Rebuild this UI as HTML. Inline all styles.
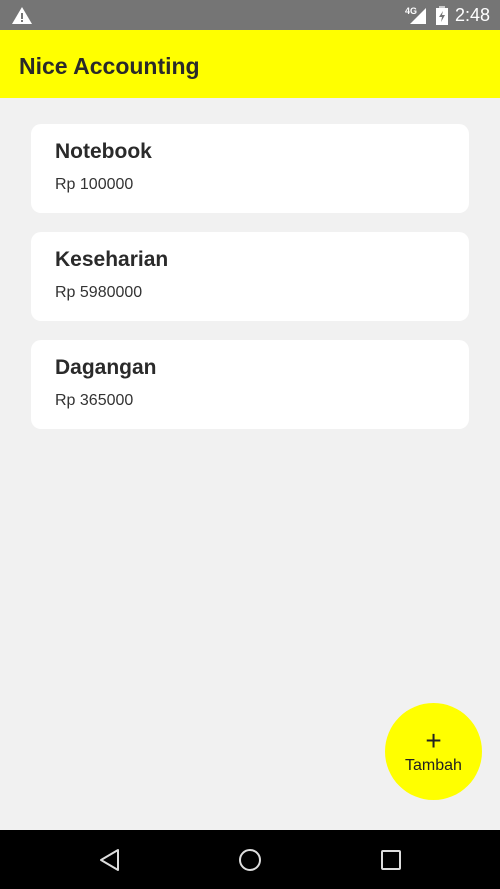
<!DOCTYPE html>
<html><head><style>
*{margin:0;padding:0;box-sizing:border-box}
body{width:500px;height:889px;background:#f1f1f1;font-family:"Liberation Sans",Roboto,sans-serif;position:relative;overflow:hidden}
.sb{position:absolute;left:0;top:0;width:500px;height:30px;background:#757575}
.ab{position:absolute;left:0;top:30px;width:500px;height:68px;background:#ffff00}
.ab h1{position:absolute;left:19px;top:23px;font-size:23px;font-weight:bold;color:#2a2a2a;letter-spacing:0}
.card{position:absolute;left:31px;width:438px;height:89px;background:#fff;border-radius:10px}
.card b{position:absolute;left:24px;top:16px;font-size:21px;color:#2a2a2a}
.card span{position:absolute;left:24px;top:52px;font-size:16px;color:#333}
.fab{position:absolute;left:385px;top:703px;width:97px;height:97px;border-radius:50%;background:#ffff00;text-align:center;color:#222}
.nav{position:absolute;left:0;top:830px;width:500px;height:59px;background:#000}
</style></head><body>
<div class="sb">
<svg style="position:absolute;left:12px;top:7px" width="20" height="17" viewBox="0 0 20 17"><path d="M10 0L20 17H0Z" fill="#fff"/><rect x="9" y="6" width="2" height="6" fill="#757575"/><rect x="9" y="13" width="2" height="2" fill="#757575"/></svg>
<div style="position:absolute;left:405px;top:6px;color:#fff;font-size:9px;font-weight:bold">4G</div>
<svg style="position:absolute;left:410px;top:8px" width="17" height="16"><path d="M16 0V16H0Z" fill="#fff"/></svg>
<svg style="position:absolute;left:436px;top:6px" width="12" height="19"><rect x="3" y="0" width="6" height="2" fill="#ccc"/><rect x="0" y="2" width="12" height="17" fill="#fff"/><path d="M7 5L3 11H6L5 16L9 9H6Z" fill="#757575"/></svg>
<div style="position:absolute;left:455px;top:5px;color:#fff;font-size:18px">2:48</div>
</div>
<div class="ab"><h1>Nice Accounting</h1></div>
<div class="card" style="top:124px"><b>Notebook</b><span>Rp 100000</span></div>
<div class="card" style="top:232px"><b>Keseharian</b><span>Rp 5980000</span></div>
<div class="card" style="top:340px"><b>Dagangan</b><span>Rp 365000</span></div>
<div class="fab"><div style="font-size:28px;line-height:28px;margin-top:24px">+</div><div style="font-size:16px;margin-top:2px">Tambah</div></div>
<div class="nav">
<svg style="position:absolute;left:99px;top:18px" width="22" height="24"><path d="M19 2V22L2 12Z" fill="none" stroke="#ddd" stroke-width="2" stroke-linejoin="round"/></svg>
<svg style="position:absolute;left:238px;top:18px" width="24" height="24"><circle cx="12" cy="12" r="10" fill="none" stroke="#ddd" stroke-width="2"/></svg>
<svg style="position:absolute;left:381px;top:20px" width="20" height="20"><rect x="1" y="1" width="18" height="18" rx="1" fill="none" stroke="#ddd" stroke-width="2"/></svg>
</div>
</body></html>
